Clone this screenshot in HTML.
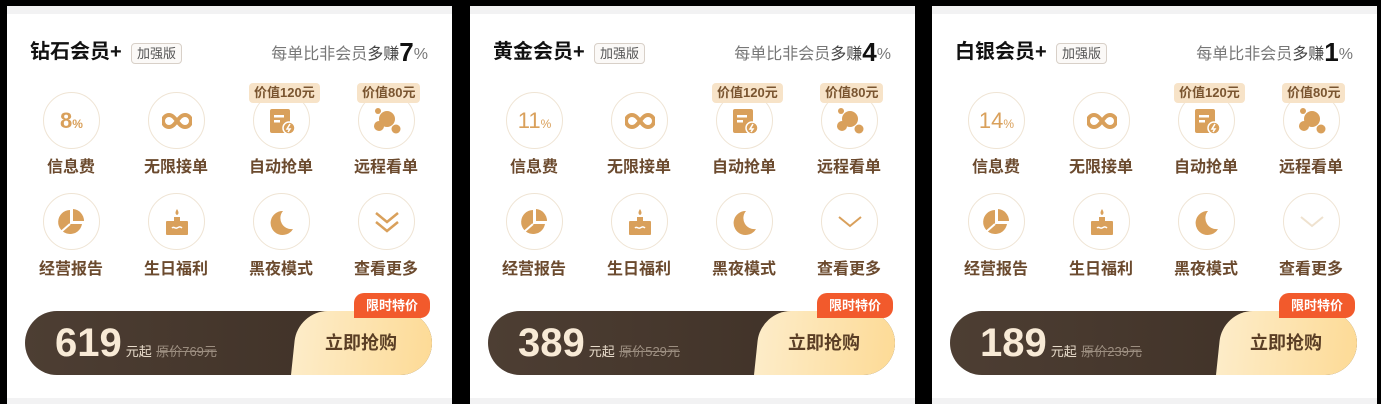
<!DOCTYPE html>
<html><head><meta charset="utf-8"><style>
*{margin:0;padding:0;box-sizing:border-box}
body{width:1381px;height:404px;background:#000;position:relative;overflow:hidden;font-family:"Liberation Sans","Noto Sans CJK SC",sans-serif}
.card{position:absolute;top:6px;width:445px;height:398px;background:#f2f2f3}
.in{position:absolute;left:0;top:8px;width:445px;height:384px;background:#fff}
.a{position:absolute}
.title{left:23px;top:24px;font-size:20px;font-weight:bold;color:#111;line-height:28px}
.badge{left:124px;top:29px;width:51px;height:21px;border:1px solid #d8d0c8;border-radius:4px;font-size:13px;color:#555;text-align:center;line-height:19px;background:#fbf9f7}
.rt{right:24px;top:24px;font-size:16px;color:#777;line-height:28px;white-space:nowrap}
.rt b{font-size:26px;color:#111;font-weight:bold;vertical-align:-2px}
.rt .d{color:#444}
.c{width:57px;height:57px;border:1px solid #efe4d4;border-radius:50%;display:flex;align-items:center;justify-content:center}
.l{width:100px;text-align:center;font-size:16px;font-weight:bold;color:#6b4a2e;line-height:20px}
.tag{height:20px;background:#f7e3c8;border-radius:4px;font-size:13px;font-weight:bold;color:#7a5530;line-height:20px;padding:0 5px;white-space:nowrap}
.bar{left:18px;top:305px;width:407px;height:64px;border-radius:32px;background:linear-gradient(90deg,#4d3e33,#3d2f25);overflow:hidden}
.btn{position:absolute;left:266px;top:0;width:160px;height:64px;border-radius:30px 0 0 0;background:linear-gradient(90deg,#fdecc8,#fdd88f);transform:skewX(-6deg);transform-origin:bottom left}
.bt{position:absolute;left:266px;top:0;width:140px;height:64px;line-height:64px;text-align:center;font-size:18px;font-weight:bold;color:#5a3e25}
.price{position:absolute;left:30px;top:0;line-height:64px;color:#f8ead6;white-space:nowrap}
.price b{font-size:40px;font-weight:bold}
.price span{font-size:13px;color:#e8dccb;margin-left:4px}
.price s{font-size:13px;color:#9c8e80}
.lim{left:347px;top:287px;width:76px;height:25px;background:#f25a2c;border-radius:10px 10px 10px 0;color:#fff;font-size:13px;font-weight:bold;text-align:center;line-height:25px}
</style></head><body>

<div class="card" style="left:7px"><div class="in">
<div class="a title">钻石会员+</div><div class="a badge">加强版</div>
<div class="a rt">每单比非会员<span class="d">多赚</span><b>7</b>%</div>
</div>
<div class="a c" style="left:36px;top:86px"><span style="color:#d9a05b;font-size:22px;font-weight:bold">8<small style="font-size:12px">%</small></span></div>
<div class="a c" style="left:141px;top:86px"><svg width="30" height="20" viewBox="0 0 30 20"><path d="M15 10c-3-4-5-6-8-6a6 6 0 0 0 0 12c3 0 5-2 8-6s5-6 8-6a6 6 0 0 1 0 12c-3 0-5-2-8-6z" fill="none" stroke="#d9a05b" stroke-width="4"/></svg></div>
<div class="a c" style="left:246px;top:86px"><svg width="30" height="30" viewBox="0 0 30 30"><rect x="3" y="3" width="20" height="24" rx="2" fill="#d9a05b"/><rect x="7" y="9" width="10" height="2.5" fill="#fff"/><rect x="7" y="14" width="6" height="2.5" fill="#fff"/><circle cx="22" cy="22" r="6" fill="#d9a05b" stroke="#fff" stroke-width="1.5"/><path d="M23 18l-3 5h3l-2 3" stroke="#fff" stroke-width="1.5" fill="none"/></svg></div>
<div class="a c" style="left:351px;top:86px"><svg width="30" height="30" viewBox="0 0 30 30"><circle cx="6" cy="5" r="3" fill="#d9a05b"/><circle cx="15" cy="13" r="8" fill="#d9a05b"/><circle cx="7" cy="20" r="5" fill="#d9a05b"/><circle cx="24" cy="23" r="4.5" fill="#d9a05b"/></svg></div>
<div class="a tag" style="left:242px;top:77px">价值120元</div>
<div class="a tag" style="left:350px;top:77px">价值80元</div>
<div class="a l" style="left:14px;top:152px">信息费</div><div class="a l" style="left:119px;top:152px">无限接单</div><div class="a l" style="left:224px;top:152px">自动抢单</div><div class="a l" style="left:329px;top:152px">远程看单</div>
<div class="a c" style="left:36px;top:187px"><svg width="30" height="30" viewBox="0 0 30 30"><path d="M13 3a12 12 0 1 0 12 14H13z" fill="#d9a05b"/><path d="M16 2v12h11A12 12 0 0 0 16 2z" fill="#d9a05b"/><path d="M13 17L5 24" stroke="#fff" stroke-width="2"/></svg></div>
<div class="a c" style="left:141px;top:187px"><svg width="30" height="30" viewBox="0 0 30 30"><path d="M15 2c2 3 2 5 0 6c-2-1-2-3 0-6z" fill="#d9a05b"/><rect x="12" y="10" width="6" height="4" fill="#d9a05b"/><rect x="4" y="14" width="22" height="14" rx="1" fill="#d9a05b"/><path d="M10 21c2-2 3 1 5 0s3-2 5 0" stroke="#fff" stroke-width="1.5" fill="none"/></svg></div>
<div class="a c" style="left:246px;top:187px"><svg width="30" height="30" viewBox="0 0 30 30"><path d="M16 4a12 12 0 1 0 10 18A11 11 0 0 1 16 4z" fill="#d9a05b"/></svg></div>
<div class="a c" style="left:351px;top:187px"><svg width="30" height="30" viewBox="0 0 30 30"><path d="M4 6l11 9 11-9M4 15l11 9 11-9" stroke="#d9a05b" stroke-width="2.5" fill="none"/></svg></div>
<div class="a l" style="left:14px;top:254px">经营报告</div><div class="a l" style="left:119px;top:254px">生日福利</div><div class="a l" style="left:224px;top:254px">黑夜模式</div><div class="a l" style="left:329px;top:254px">查看更多</div>
<div class="a bar"><div class="btn"></div><div class="bt">立即抢购</div><div class="price"><b>619</b><span>元起</span> <s>原价769元</s></div></div>
<div class="a lim">限时特价</div>
</div>

<div class="card" style="left:470px"><div class="in">
<div class="a title">黄金会员+</div><div class="a badge">加强版</div>
<div class="a rt">每单比非会员<span class="d">多赚</span><b>4</b>%</div>
</div>
<div class="a c" style="left:36px;top:86px"><span style="color:#d9a05b;font-size:22px">11<small style="font-size:12px">%</small></span></div>
<div class="a c" style="left:141px;top:86px"><svg width="30" height="20" viewBox="0 0 30 20"><path d="M15 10c-3-4-5-6-8-6a6 6 0 0 0 0 12c3 0 5-2 8-6s5-6 8-6a6 6 0 0 1 0 12c-3 0-5-2-8-6z" fill="none" stroke="#d9a05b" stroke-width="4"/></svg></div>
<div class="a c" style="left:246px;top:86px"><svg width="30" height="30" viewBox="0 0 30 30"><rect x="3" y="3" width="20" height="24" rx="2" fill="#d9a05b"/><rect x="7" y="9" width="10" height="2.5" fill="#fff"/><rect x="7" y="14" width="6" height="2.5" fill="#fff"/><circle cx="22" cy="22" r="6" fill="#d9a05b" stroke="#fff" stroke-width="1.5"/><path d="M23 18l-3 5h3l-2 3" stroke="#fff" stroke-width="1.5" fill="none"/></svg></div>
<div class="a c" style="left:351px;top:86px"><svg width="30" height="30" viewBox="0 0 30 30"><circle cx="6" cy="5" r="3" fill="#d9a05b"/><circle cx="15" cy="13" r="8" fill="#d9a05b"/><circle cx="7" cy="20" r="5" fill="#d9a05b"/><circle cx="24" cy="23" r="4.5" fill="#d9a05b"/></svg></div>
<div class="a tag" style="left:242px;top:77px">价值120元</div>
<div class="a tag" style="left:350px;top:77px">价值80元</div>
<div class="a l" style="left:14px;top:152px">信息费</div><div class="a l" style="left:119px;top:152px">无限接单</div><div class="a l" style="left:224px;top:152px">自动抢单</div><div class="a l" style="left:329px;top:152px">远程看单</div>
<div class="a c" style="left:36px;top:187px"><svg width="30" height="30" viewBox="0 0 30 30"><path d="M13 3a12 12 0 1 0 12 14H13z" fill="#d9a05b"/><path d="M16 2v12h11A12 12 0 0 0 16 2z" fill="#d9a05b"/><path d="M13 17L5 24" stroke="#fff" stroke-width="2"/></svg></div>
<div class="a c" style="left:141px;top:187px"><svg width="30" height="30" viewBox="0 0 30 30"><path d="M15 2c2 3 2 5 0 6c-2-1-2-3 0-6z" fill="#d9a05b"/><rect x="12" y="10" width="6" height="4" fill="#d9a05b"/><rect x="4" y="14" width="22" height="14" rx="1" fill="#d9a05b"/><path d="M10 21c2-2 3 1 5 0s3-2 5 0" stroke="#fff" stroke-width="1.5" fill="none"/></svg></div>
<div class="a c" style="left:246px;top:187px"><svg width="30" height="30" viewBox="0 0 30 30"><path d="M16 4a12 12 0 1 0 10 18A11 11 0 0 1 16 4z" fill="#d9a05b"/></svg></div>
<div class="a c" style="left:351px;top:187px"><svg width="30" height="30" viewBox="0 0 30 30"><path d="M4 10l11 9 11-9" stroke="#d9a05b" stroke-width="2" fill="none"/></svg></div>
<div class="a l" style="left:14px;top:254px">经营报告</div><div class="a l" style="left:119px;top:254px">生日福利</div><div class="a l" style="left:224px;top:254px">黑夜模式</div><div class="a l" style="left:329px;top:254px">查看更多</div>
<div class="a bar"><div class="btn"></div><div class="bt">立即抢购</div><div class="price"><b>389</b><span>元起</span> <s>原价529元</s></div></div>
<div class="a lim">限时特价</div>
</div>

<div class="card" style="left:932px"><div class="in">
<div class="a title">白银会员+</div><div class="a badge">加强版</div>
<div class="a rt">每单比非会员<span class="d">多赚</span><b>1</b>%</div>
</div>
<div class="a c" style="left:36px;top:86px"><span style="color:#d9a05b;font-size:22px">14<small style="font-size:12px">%</small></span></div>
<div class="a c" style="left:141px;top:86px"><svg width="30" height="20" viewBox="0 0 30 20"><path d="M15 10c-3-4-5-6-8-6a6 6 0 0 0 0 12c3 0 5-2 8-6s5-6 8-6a6 6 0 0 1 0 12c-3 0-5-2-8-6z" fill="none" stroke="#d9a05b" stroke-width="4"/></svg></div>
<div class="a c" style="left:246px;top:86px"><svg width="30" height="30" viewBox="0 0 30 30"><rect x="3" y="3" width="20" height="24" rx="2" fill="#d9a05b"/><rect x="7" y="9" width="10" height="2.5" fill="#fff"/><rect x="7" y="14" width="6" height="2.5" fill="#fff"/><circle cx="22" cy="22" r="6" fill="#d9a05b" stroke="#fff" stroke-width="1.5"/><path d="M23 18l-3 5h3l-2 3" stroke="#fff" stroke-width="1.5" fill="none"/></svg></div>
<div class="a c" style="left:351px;top:86px"><svg width="30" height="30" viewBox="0 0 30 30"><circle cx="6" cy="5" r="3" fill="#d9a05b"/><circle cx="15" cy="13" r="8" fill="#d9a05b"/><circle cx="7" cy="20" r="5" fill="#d9a05b"/><circle cx="24" cy="23" r="4.5" fill="#d9a05b"/></svg></div>
<div class="a tag" style="left:242px;top:77px">价值120元</div>
<div class="a tag" style="left:350px;top:77px">价值80元</div>
<div class="a l" style="left:14px;top:152px">信息费</div><div class="a l" style="left:119px;top:152px">无限接单</div><div class="a l" style="left:224px;top:152px">自动抢单</div><div class="a l" style="left:329px;top:152px">远程看单</div>
<div class="a c" style="left:36px;top:187px"><svg width="30" height="30" viewBox="0 0 30 30"><path d="M13 3a12 12 0 1 0 12 14H13z" fill="#d9a05b"/><path d="M16 2v12h11A12 12 0 0 0 16 2z" fill="#d9a05b"/><path d="M13 17L5 24" stroke="#fff" stroke-width="2"/></svg></div>
<div class="a c" style="left:141px;top:187px"><svg width="30" height="30" viewBox="0 0 30 30"><path d="M15 2c2 3 2 5 0 6c-2-1-2-3 0-6z" fill="#d9a05b"/><rect x="12" y="10" width="6" height="4" fill="#d9a05b"/><rect x="4" y="14" width="22" height="14" rx="1" fill="#d9a05b"/><path d="M10 21c2-2 3 1 5 0s3-2 5 0" stroke="#fff" stroke-width="1.5" fill="none"/></svg></div>
<div class="a c" style="left:246px;top:187px"><svg width="30" height="30" viewBox="0 0 30 30"><path d="M16 4a12 12 0 1 0 10 18A11 11 0 0 1 16 4z" fill="#d9a05b"/></svg></div>
<div class="a c" style="left:351px;top:187px"><svg width="30" height="30" viewBox="0 0 30 30"><path d="M4 10l11 9 11-9" stroke="#efe2cf" stroke-width="2" fill="none"/></svg></div>
<div class="a l" style="left:14px;top:254px">经营报告</div><div class="a l" style="left:119px;top:254px">生日福利</div><div class="a l" style="left:224px;top:254px">黑夜模式</div><div class="a l" style="left:329px;top:254px">查看更多</div>
<div class="a bar"><div class="btn"></div><div class="bt">立即抢购</div><div class="price"><b>189</b><span>元起</span> <s>原价239元</s></div></div>
<div class="a lim">限时特价</div>
</div>

</body></html>
